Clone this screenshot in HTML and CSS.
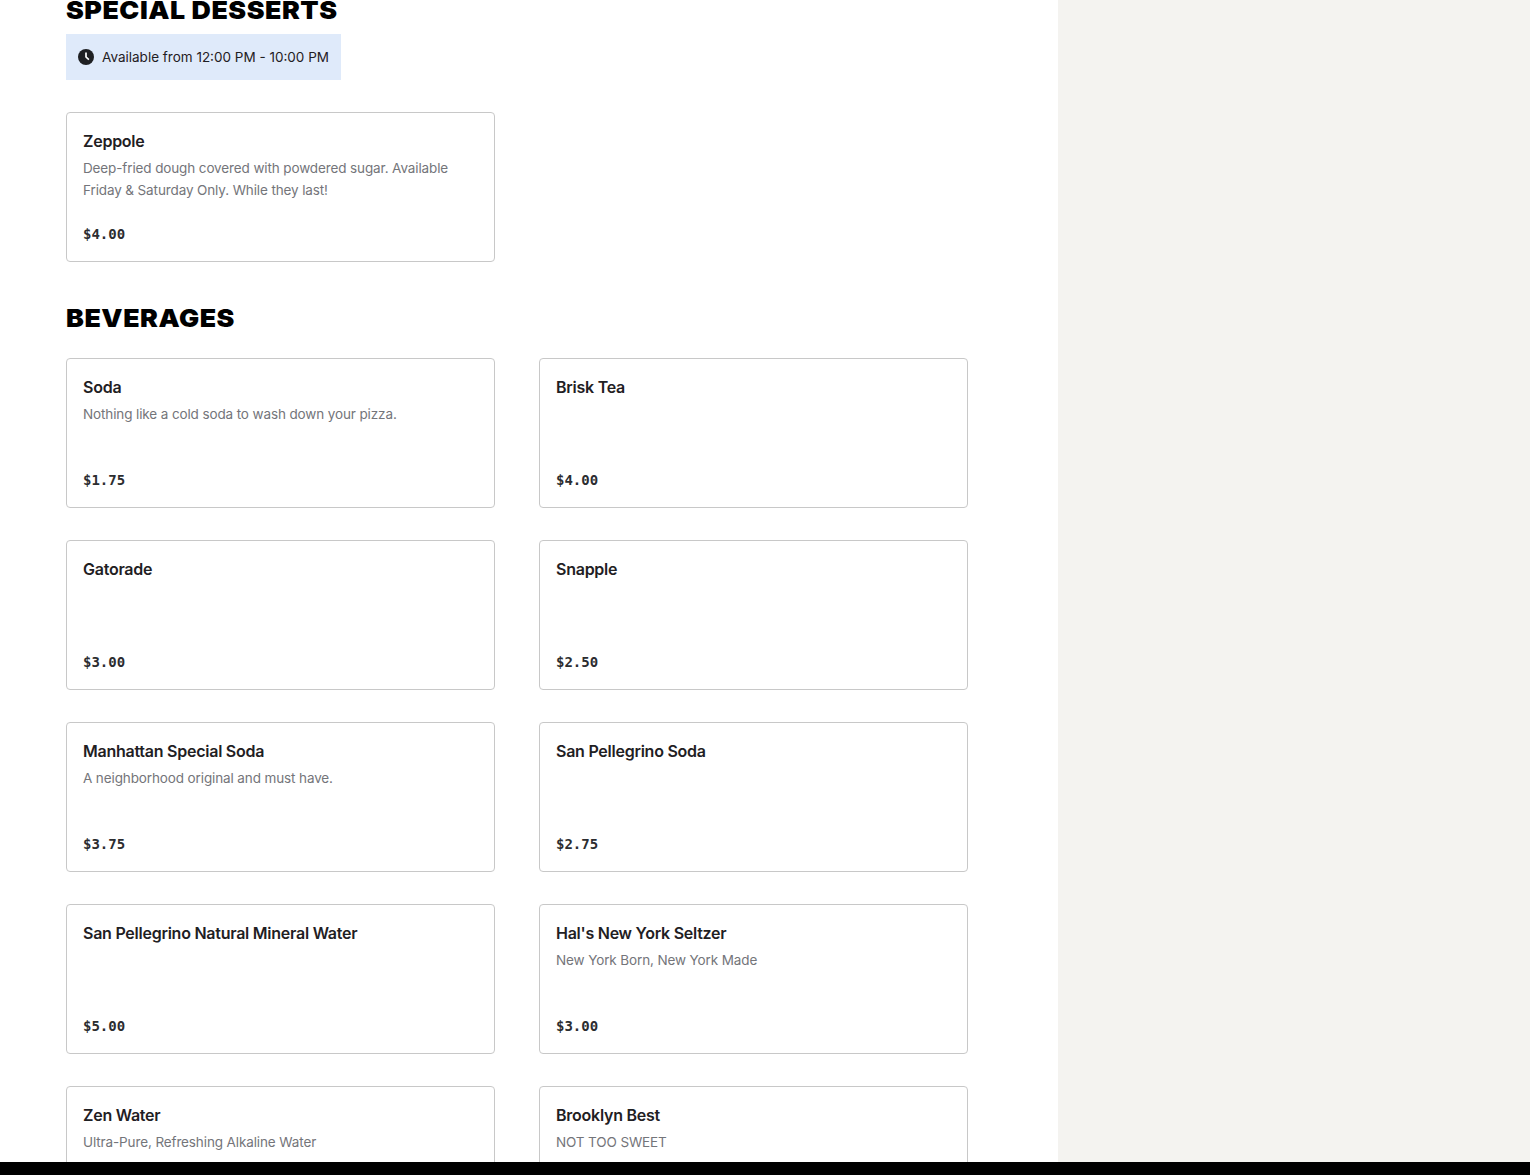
FILE: index.html
```html
<!DOCTYPE html>
<html lang="en">
<head>
<meta charset="utf-8">
<title>Menu</title>
<link rel="stylesheet" href="styles.css">
</head>
<body>
<div class="page">
  <main class="menu">
    <section class="section section-first">
      <h2 class="heading">SPECIAL DESSERTS</h2>
      <div class="hours">
        <svg class="clock" viewBox="0 0 16 16" width="16" height="16" aria-hidden="true"><circle cx="8" cy="8" r="8" fill="#1f2023"/><path d="M8 3.4V8l2.9 2.7" fill="none" stroke="#fff" stroke-width="1.7"/></svg>
        <span class="hours-text">Available from 12:00 PM - 10:00 PM</span>
      </div>
      <div class="grid">
        <article class="card"><h3 class="name">Zeppole</h3><p class="desc">Deep-fried dough covered with powdered sugar. Available Friday &amp; Saturday Only. While they last!</p><div class="price">$4.00</div></article>
      </div>
    </section>
    <section class="section">
      <h2 class="heading">BEVERAGES</h2>
      <div class="grid">
        <article class="card"><h3 class="name">Soda</h3><p class="desc">Nothing like a cold soda to wash down your pizza.</p><div class="price">$1.75</div></article>
        <article class="card"><h3 class="name">Brisk Tea</h3><div class="price">$4.00</div></article>
        <article class="card"><h3 class="name">Gatorade</h3><div class="price">$3.00</div></article>
        <article class="card"><h3 class="name">Snapple</h3><div class="price">$2.50</div></article>
        <article class="card"><h3 class="name">Manhattan Special Soda</h3><p class="desc">A neighborhood original and must have.</p><div class="price">$3.75</div></article>
        <article class="card"><h3 class="name">San Pellegrino Soda</h3><div class="price">$2.75</div></article>
        <article class="card"><h3 class="name">San Pellegrino Natural Mineral Water</h3><div class="price">$5.00</div></article>
        <article class="card"><h3 class="name">Hal's New York Seltzer</h3><p class="desc">New York Born, New York Made</p><div class="price">$3.00</div></article>
        <article class="card"><h3 class="name">Zen Water</h3><p class="desc">Ultra-Pure, Refreshing Alkaline Water</p><div class="price">$3.00</div></article>
        <article class="card"><h3 class="name">Brooklyn Best</h3><p class="desc">NOT TOO SWEET</p><div class="price">$3.00</div></article>
      </div>
    </section>
  </main>
  <aside class="side"></aside>
</div>
<div class="bottom-bar"></div>
</body>
</html>
```
FILE: styles.css
```css
html, body { margin: 0; height: 100%; overflow: hidden; background: #fff; }
body { font-family: Inter, "Liberation Sans", sans-serif; color: #1f2023; }
.page { display: flex; height: 100vh; }
.menu { width: 1058px; flex: none; box-sizing: border-box; padding-left: 66px; margin-top: -6px; }
.side { flex: 1; background: #f4f3f0; }
.bottom-bar { position: fixed; left: 0; right: 0; bottom: 0; height: 13px; background: #000; }
.section { margin-bottom: 40px; }
.heading { margin: 0 0 24px; font-family: Inter, sans-serif; font-weight: 900; font-size: 25px; line-height: 32px; letter-spacing: 0.5px; color: #000; transform: scaleX(1.07); transform-origin: left center; }
.section-first .heading { margin-bottom: 8px; }
.hours { display: inline-flex; align-items: center; gap: 8px; width: 275px; height: 46px; box-sizing: border-box; padding: 0 12px; background: #dfeafa; font-size: 13.5px; line-height: 22px; margin-bottom: 32px; vertical-align: top; }
.hours-text { white-space: nowrap; }
.clock { flex: none; }
.grid { display: grid; grid-template-columns: 429px 429px; column-gap: 44px; row-gap: 32px; }
.card { box-sizing: border-box; height: 150px; border: 1px solid #c8c8c8; border-radius: 4px; padding: 16px; display: flex; flex-direction: column; }
.name { margin: 0; font-size: 16px; line-height: 24px; font-weight: 600; letter-spacing: -0.25px; color: #1f2023; }
.desc { margin: 4px 0 0; font-size: 13.5px; line-height: 22px; letter-spacing: -0.12px; color: #74757a; }
.price { margin-top: auto; font-family: "DejaVu Sans Mono", monospace; font-size: 14px; line-height: 22px; font-weight: 700; color: #2c2d30; }
```
